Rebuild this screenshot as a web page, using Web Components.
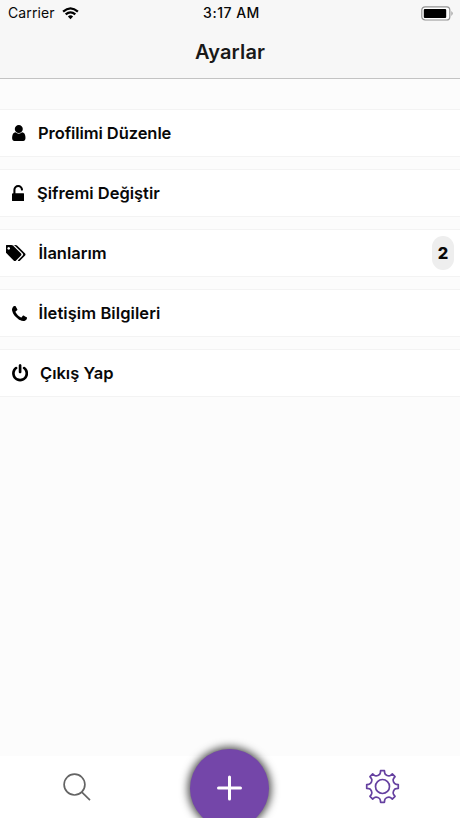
<!DOCTYPE html>
<html lang="tr"><head><meta charset="utf-8"><title>Ayarlar</title>
<style>html,body{margin:0;height:100%;overflow:hidden;background:#fcfcfc}body{font-family:Inter,"Liberation Sans",sans-serif;color:#080808}</style></head>
<body><settings-app></settings-app>
<script>
const define=(name,html)=>customElements.define(name,class extends HTMLElement{
  constructor(){super();const t=document.createElement('template');t.innerHTML=html;this.attachShadow({mode:'open'}).append(t.content.cloneNode(true));}
});

define('status-bar',`<style>
:host{display:grid;grid-template-columns:1fr auto 1fr;align-items:center;height:26px;padding:0 6px 0 8px;font-size:14px;line-height:26px}
.l{display:flex;align-items:center;gap:7px}.name{letter-spacing:.12px}.time{font-weight:500;letter-spacing:.5px;padding-left:1px}
.b{justify-self:end;display:flex}svg{display:block}
</style>
<div class="l"><span class="name">Carrier</span><svg width="17" height="13" viewBox="0 0 17 13" fill="none" stroke="#000" stroke-width="2.3"><path d="M1.1 4.6Q8.5-1.8 15.9 4.6M3.7 7.4Q8.5 3.3 13.3 7.4"/><path d="M5.9 9.4Q8.5 7.3 11.1 9.4L8.5 12.2Z" fill="#000" stroke="none"/></svg></div>
<span class="time">3:17 AM</span>
<div class="b"><svg width="33" height="15" viewBox="0 0 33 15"><rect x=".8" y=".8" width="28" height="13.2" rx="3.3" fill="#fff" stroke="#929292" stroke-width="1.2"/><rect x="2.8" y="2.9" width="22.4" height="9" rx="1" fill="#000"/><path d="M30.5 5.1q2.2 2.4 0 4.8z" fill="#888"/></svg></div>`);

define('nav-header',`<style>
:host{display:block;box-sizing:border-box;height:79px;background:#f7f7f7;border-bottom:1px solid #c3c3c3}
h1{margin:0;height:52px;line-height:52px;text-align:center;font-size:20px;font-weight:600;letter-spacing:.15px;color:#191919}
</style><status-bar></status-bar><h1><slot></slot></h1>`);

define('settings-row',`<style>
:host{display:flex;align-items:center;box-sizing:border-box;height:48px;background:#fff;border-top:1px solid #f3f3f3;border-bottom:1px solid #f3f3f3;padding:0 6px 0 0;font-size:16.5px;font-weight:600;white-space:nowrap}
.icon{display:flex;align-items:center;flex:none;width:var(--text-x,39px);padding-left:var(--icon-x,12px);box-sizing:border-box}
.label{flex:1;letter-spacing:var(--track,0)}
</style><span class="icon"><slot name="icon"></slot></span><span class="label"><slot></slot></span><slot name="end"></slot>`);

define('count-badge',`<style>
:host{display:flex;align-items:center;justify-content:center;width:22px;height:34px;border-radius:11px;background:#eee;font-size:16.5px;font-weight:800}
</style><slot></slot>`);

const paths={
user:['256 128 1280 1536',13.6,16,'M1536 1399q0 109-62.5 187t-150.5 78h-854q-88 0-150.5-78t-62.5-187q0-85 8.5-160.5t31.5-152 58.5-131 94-89 134.5-34.5q131 128 313 128t313-128q76 0 134.5 34.5t94 89 58.5 131 31.5 152 8.5 160.5zm-256-887q0 159-112.5 271.5t-271.5 112.5-271.5-112.5-112.5-271.5 112.5-271.5 271.5-112.5 271.5 112.5 112.5 271.5z'],
unlock:['320 0 1152 1536',12.4,16.5,'M1376 768q40 0 68 28t28 68v576q0 40-28 68t-68 28h-960q-40 0-68-28t-28-68v-576q0-40 28-68t68-28h32v-320q0-185 131.5-316.5t316.5-131.5 316.5 131.5 131.5 316.5q0 26-19 45t-45 19h-64q-26 0-45-19t-19-45q0-106-75-181t-181-75-181 75-75 181v320h736z'],
tags:['0 128 1835 1515',19.5,16.1,'M384 448q0-53-37.5-90.5t-90.5-37.5-90.5 37.5-37.5 90.5 37.5 90.5 90.5 37.5 90.5-37.5 37.5-90.5zm1067 576q0 53-37 90l-491 492q-39 37-91 37-53 0-90-37l-715-716q-38-37-64.5-101t-26.5-117v-416q0-52 38-90t90-38h416q53 0 117 26.5t102 64.5l715 714q37 39 37 91zm384 0q0 53-37 90l-491 492q-39 37-91 37-36 0-59-14t-53-45l470-470q37-37 37-90 0-52-37-91l-715-714q-38-38-102-64.5t-117-26.5h224q53 0 117 26.5t102 64.5l715 714q37 39 37 91z'],
phone:['192 128 1408 1408',15,15,'M1600 1240q0 27-10 70.5t-21 68.5q-21 50-122 106-94 51-186 51-27 0-53-3.5t-57.5-12.5-47-14.5-55.5-20.5-49-18q-98-35-175-83-127-79-264-216t-216-264q-48-77-83-175-3-9-18-49t-20.5-55.5-14.5-47-12.5-57.5-3.5-53q0-92 51-186 56-101 106-122 25-11 68.5-21t70.5-10q14 0 21 3 18 6 53 76 11 19 30 54t35 63.5 31 53.5q3 4 17.5 25t21.5 35.5 7 28.5q0 20-28.5 50t-62 55-62 53-28.5 46q0 9 5 22.5t8.5 20.5 14 24 11.5 19q76 137 174 235t235 174q2 1 19 11.5t24 14 20.5 8.5 22.5 5q18 0 46-28.5t53-62 55-62 50-28.5q14 0 28.5 7t35.5 21.5 25 17.5q25 15 53.5 31t63.5 35 54 30q70 35 76 53 3 7 3 21z'],
power:['128 0 1536 1664',16.2,17.4,'M1664 896q0 156-61 298t-164 245-245 164-298 61-298-61-245-164-164-245-61-298q0-182 80.5-343t226.5-270q43-32 95.5-25t83.5 50q32 42 24.5 94.5t-49.5 84.5q-98 74-151.5 181t-53.5 228q0 104 40.5 198.5t109.5 163.5 163.5 109.5 198.5 40.5 198.5-40.5 163.5-109.5 109.5-163.5 40.5-198.5q0-121-53.5-228t-151.5-181q-42-32-49.5-84.5t24.5-94.5q31-43 84-50t95 25q146 109 226.5 270t80.5 343zm-640-768v640q0 52-38 90t-90 38-90-38-38-90v-640q0-52 38-90t90-38 90 38 38 90z']};
customElements.define('solid-icon',class extends HTMLElement{
  constructor(){super();this.attachShadow({mode:'open'});}
  connectedCallback(){const [v,w,h,d]=paths[this.getAttribute('name')];this.shadowRoot.innerHTML=`<style>:host{display:block}svg{display:block}</style><svg width="${w}" height="${h}" viewBox="${v}"><path d="${d}"/></svg>`;}
});

// Eight-toothed outline with softly curved valleys, centred on the origin.
const pt=(r,a)=>{const t=a*Math.PI/180;return (r*Math.sin(t)).toFixed(2)+' '+(-r*Math.cos(t)).toFixed(2);};
let gear='M'+pt(15.9,-7);
for(let k=0;k<8;k++){const a=k*45;gear+=`L${pt(15.9,a+7)}L${pt(13.8,a+9)}C${pt(11.6,a+12)} ${pt(11.6,a+33)} ${pt(13.8,a+36)}L${pt(15.9,a+38)}`;}
gear+='Z';

define('tab-bar',`<style>
:host{display:grid;grid-template:62px/repeat(3,1fr);align-items:center;height:62px;background:#fff;position:relative}
svg{display:block;justify-self:center}
.add{justify-self:center;width:79px;height:79px;border-radius:50%;background:#7446a9;box-shadow:0 0 9px 2px rgba(0,0,0,.72);display:grid;place-items:center;margin-top:2px}
</style>
<svg width="30" height="30" viewBox="0 0 30 30" fill="none" stroke="#646464" stroke-width="1.7"><circle cx="12.5" cy="12.6" r="10.4"/><path d="M19.8 20.2L28 28.2"/></svg>
<div class="add"><svg width="26" height="26" viewBox="0 0 26 26" fill="none" stroke="#fff" stroke-width="3" stroke-linecap="round"><path d="M12.5 2v22M1.5 13h22"/></svg></div>
<svg width="36" height="36" viewBox="-17.5 -17.5 36 36" fill="none" stroke="#6540a0" stroke-width="1.7" stroke-linejoin="round"><path d="${gear}"/><circle r="7"/></svg>`);

define('settings-app',`<style>
:host{display:flex;flex-direction:column;height:818px;overflow:hidden}
main{flex:1;display:flex;flex-direction:column;gap:12px;padding-top:30px}
</style>
<nav-header>Ayarlar</nav-header>
<main>
<settings-row style="--text-x:38px;--track:-.08px"><solid-icon slot="icon" name="user"></solid-icon>Profilimi Düzenle</settings-row>
<settings-row style="--text-x:37px"><solid-icon slot="icon" name="unlock"></solid-icon>Şifremi Değiştir</settings-row>
<settings-row style="--icon-x:6px;--text-x:38.5px"><solid-icon slot="icon" name="tags"></solid-icon>İlanlarım<count-badge slot="end">2</count-badge></settings-row>
<settings-row style="--text-x:38.5px;--track:.08px"><solid-icon slot="icon" name="phone"></solid-icon>İletişim Bilgileri</settings-row>
<settings-row style="--text-x:40px"><solid-icon slot="icon" name="power"></solid-icon>Çıkış Yap</settings-row>
</main>
<tab-bar></tab-bar>`);
</script></body></html>
